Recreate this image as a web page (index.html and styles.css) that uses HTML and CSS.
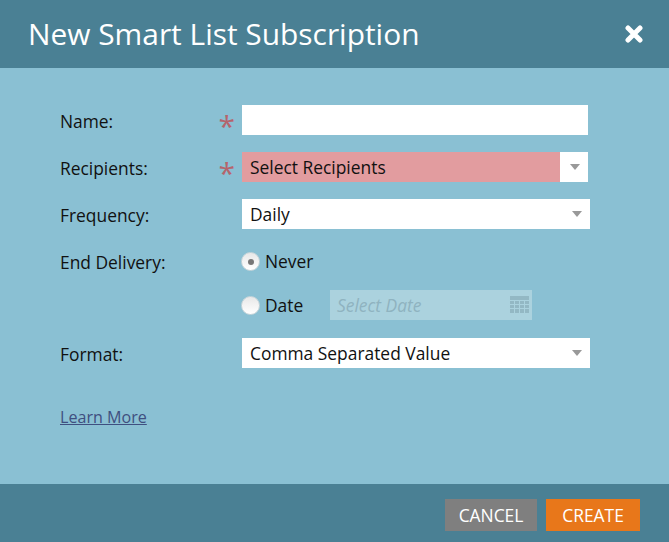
FILE: index.html
```html
<!DOCTYPE html>
<html lang="en">
<head>
    <meta charset="UTF-8">
    <title>New Smart List Subscription</title>
    <link rel="stylesheet" href="styles.css">
</head>
<body>
    <div class="dialog">
        <div class="dialog-header">
            <h1>New Smart List Subscription</h1>
            <svg class="close-icon" width="18" height="18" viewBox="0 0 18 18">
                <path d="M3 3 L15 15 M15 3 L3 15" stroke="#fff" stroke-width="5" stroke-linecap="round"/>
            </svg>
        </div>

        <div class="dialog-body">
            <div class="form-row">
                <label class="field-label">Name:<span class="required">*</span></label>
                <div class="text-input"></div>
            </div>

            <div class="form-row">
                <label class="field-label">Recipients:<span class="required">*</span></label>
                <div class="select select-short">
                    <span class="select-value select-invalid">Select Recipients</span>
                    <span class="select-trigger"><span class="arrow"></span></span>
                </div>
            </div>

            <div class="form-row">
                <label class="field-label">Frequency:</label>
                <div class="select">
                    <span class="select-value">Daily</span>
                    <span class="select-trigger"><span class="arrow"></span></span>
                </div>
            </div>

            <div class="form-row delivery-row">
                <label class="field-label">End Delivery:</label>
                <div class="delivery-options">
                    <div class="radio-line never-line">
                        <span class="radio radio-checked"></span>
                        <span class="radio-label never-label">Never</span>
                    </div>
                    <div class="radio-line">
                        <span class="radio"></span>
                        <span class="radio-label">Date</span>
                        <div class="date-input">
                            <span>Select Date</span>
                            <svg width="19" height="18" viewBox="0 0 19 18" fill="#93b8c4">
                                <rect x="0" y="0" width="19" height="4"/>
                                <rect x="0" y="5" width="4" height="3"/>
                                <rect x="5" y="5" width="4" height="3"/>
                                <rect x="10" y="5" width="4" height="3"/>
                                <rect x="15" y="5" width="4" height="3"/>
                                <rect x="0" y="9" width="4" height="3"/>
                                <rect x="5" y="9" width="4" height="3"/>
                                <rect x="10" y="9" width="4" height="3"/>
                                <rect x="15" y="9" width="4" height="3"/>
                                <rect x="0" y="13" width="4" height="4"/>
                                <rect x="5" y="13" width="4" height="4"/>
                                <rect x="10" y="13" width="4" height="4"/>
                                <rect x="15" y="13" width="4" height="4"/>
                            </svg>
                        </div>
                    </div>
                </div>
            </div>

            <div class="form-row">
                <label class="field-label">Format:</label>
                <div class="select">
                    <span class="select-value">Comma Separated Value</span>
                    <span class="select-trigger"><span class="arrow"></span></span>
                </div>
            </div>

            <a class="learn-more" href="#">Learn More</a>
        </div>

        <div class="dialog-footer">
            <button class="btn btn-cancel">CANCEL</button>
            <button class="btn btn-create">CREATE</button>
        </div>
    </div>
</body>
</html>
```

FILE: styles.css
```css
* {
    margin: 0;
    padding: 0;
    box-sizing: border-box;
}

body {
    font-family: "Open Sans", sans-serif;
    font-size: 17.4px;
    color: #111;
    background-color: #8ac0d3;
}

.dialog {
    width: 669px;
    height: 542px;
    display: flex;
    flex-direction: column;
    overflow: hidden;
}

.dialog-header {
    height: 68px;
    padding: 0 26px 0 28px;
    display: flex;
    align-items: center;
    justify-content: space-between;
    background-color: #4a8094;
}

.dialog-header h1 {
    font-size: 29.9px;
    font-weight: 400;
    margin-top: -1px;
    color: #fff;
}

.dialog-body {
    flex: 1;
    padding: 37px 0 0 60px;
    background-color: #8ac0d3;
}

.form-row {
    display: flex;
    align-items: center;
    margin-bottom: 17px;
}

.field-label {
    width: 182px;
    height: 30px;
    display: flex;
    align-items: center;
    justify-content: space-between;
    padding: 2px 7px 0 0;
    flex-shrink: 0;
}

.required {
    font-size: 30px;
    line-height: 30px;
    height: 30px;
    padding-top: 5px;
    color: #b5646c;
}

.text-input {
    width: 346px;
    height: 30px;
    background-color: #fff;
}

.select {
    width: 348px;
    height: 30px;
    display: flex;
    background-color: #fff;
}

.select-short {
    width: 346px;
}

.select-value {
    flex: 1;
    padding-left: 8px;
    line-height: 30px;
}

.select-invalid {
    background-color: #e29c9f;
}

.select-trigger {
    width: 28px;
    display: flex;
    align-items: center;
    justify-content: center;
    background-color: #fff;
}

.arrow {
    width: 0;
    height: 0;
    border-left: 5.5px solid transparent;
    border-right: 5.5px solid transparent;
    border-top: 6px solid #999;
    margin-left: 2px;
}

.delivery-row {
    align-items: flex-start;
    margin-bottom: 18px;
}

.delivery-options {
    display: flex;
    flex-direction: column;
    margin-left: -1px;
}

.radio-line {
    height: 30px;
    display: flex;
    align-items: center;
}

.never-line {
    margin-bottom: 14px;
    padding-top: 1px;
}

.never-label {
    margin-top: -2px;
}

.radio {
    width: 19px;
    height: 19px;
    margin-right: 5px;
    border-radius: 50%;
    display: flex;
    align-items: center;
    justify-content: center;
    background: linear-gradient(#e8e8e8, #fff);
    border: 1px solid #c9d6da;
}

.radio-checked::after {
    content: "";
    width: 6px;
    height: 6px;
    border-radius: 50%;
    background-color: #777;
}

.radio-label {
    width: 65px;
}

.date-input {
    width: 202px;
    height: 30px;
    padding: 0 3px 0 7px;
    display: flex;
    align-items: center;
    justify-content: space-between;
    background-color: #abd2de;
    font-style: italic;
    color: #8fb3c0;
}

.learn-more {
    display: inline-block;
    margin-top: 21px;
    font-size: 16.1px;
    color: #3f4f80;
}

.dialog-footer {
    height: 58px;
    padding: 15px 29px 0 0;
    display: flex;
    justify-content: flex-end;
    gap: 9px;
    background-color: #4a8094;
}

.btn {
    height: 32px;
    border: none;
    font-family: inherit;
    font-size: 17.4px;
    color: #fff;
}

.btn-cancel {
    width: 92px;
    background-color: #7f7f7f;
}

.btn-create {
    width: 94px;
    background-color: #e8771a;
}
```
